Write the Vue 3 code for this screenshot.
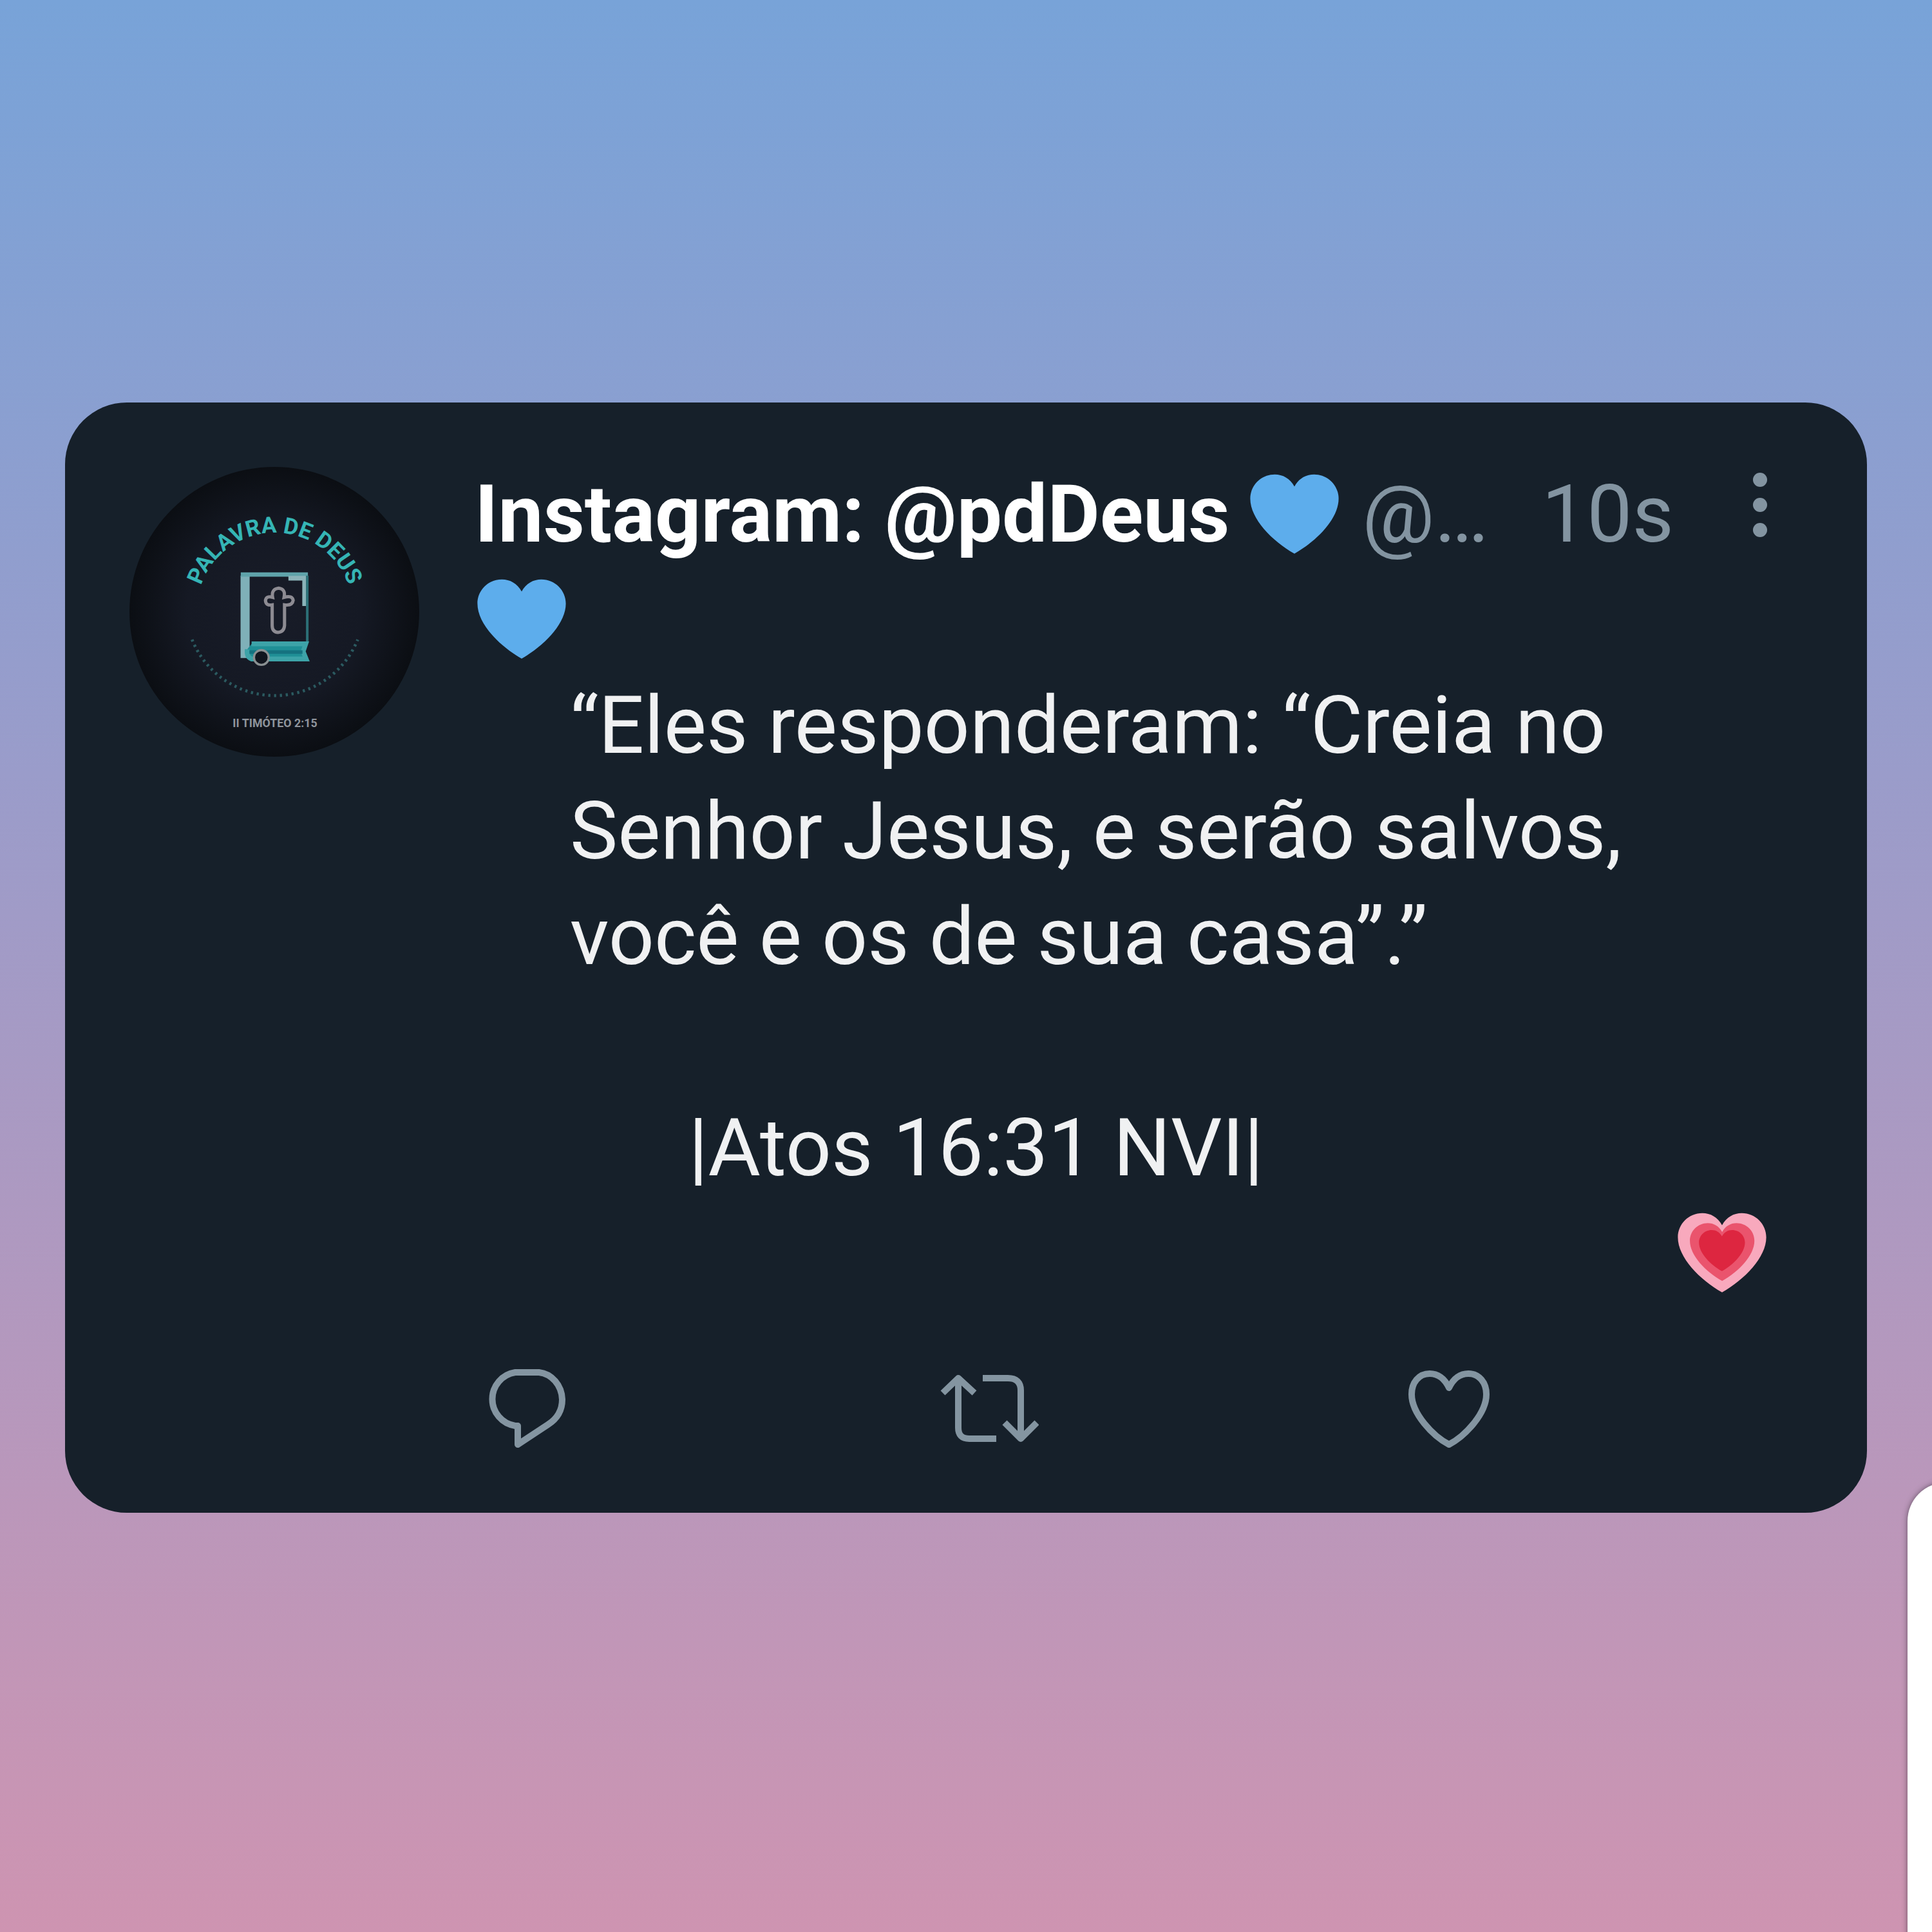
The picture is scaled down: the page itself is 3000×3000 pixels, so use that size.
<template>
  <div class="page">
    <article class="tweet">
      <!-- avatar -->
      <a class="avatar" href="#" aria-label="Palavra de Deus">
        <svg viewBox="36 48 1338 1338">
          <defs>
            <radialGradient id="avatar-bg">
              <stop offset="0" stop-color="#181c28" />
              <stop offset="0.6" stop-color="#151924" />
              <stop offset="1" stop-color="#0b0e13" />
            </radialGradient>
            <path id="avatar-arc" d="M347 712A360 360 0 0 1 1067 712" />
          </defs>
          <circle cx="705" cy="717" r="669" fill="url(#avatar-bg)" />
          <text class="arc-text" fill="#35b5b5">
            <textPath href="#avatar-arc" startOffset="50%" text-anchor="middle">PALAVRA DE DEUS</textPath>
          </text>
          <g fill="none">
            <path d="M325 845A412 412 0 0 0 1090 845" stroke="#2b5a60" stroke-width="14" stroke-dasharray="10 17" />
            <path d="M570 930V550" stroke="#7fb0b8" stroke-width="42" />
            <path d="M550 545H860" stroke="#5fa3aa" stroke-width="20" />
            <path d="M770 562H845V690" stroke="#8bb3b9" stroke-width="22" />
            <path d="M857 550V860" stroke="#2c6f76" stroke-width="12" />
            <path d="M600 865H850L838 900L852 935H600Q575 925 580 890" fill="#1f8f96" stroke="#3da3a8" stroke-width="22" />
            <path d="M590 903H835" stroke="#157280" stroke-width="16" />
            <circle cx="645" cy="928" r="34" fill="#11151e" stroke="#8a9092" stroke-width="10" />
            <path
              d="M697 650Q690 612 725 608Q758 612 750 650Q788 640 792 664Q788 690 752 685V780Q750 810 722 812Q695 810 695 780V685Q665 690 664 664Q668 642 697 650Z"
              stroke="#8d8b92"
              stroke-width="15"
            />
          </g>
          <text class="verse-text" x="708" y="1248" text-anchor="middle" fill="#8f949c">II TIMÓTEO 2:15</text>
        </svg>
      </a>

      <div class="content">
        <header class="tweet-header">
          <a class="name" href="#">Instagram: @pdDeus</a>
          <svg class="emoji" viewBox="0 0 36 36"><path fill="#5dadec" :d="heart" /></svg>
          <span class="handle">@…</span>
          <time class="time">10s</time>
          <button class="more" type="button" aria-label="Mais">
            <svg viewBox="0 0 24 102">
              <circle cx="12" cy="12" r="11" />
              <circle cx="12" cy="51" r="11" />
              <circle cx="12" cy="90" r="11" />
            </svg>
          </button>
        </header>

        <div class="tweet-body">
          <div class="row">
            <svg class="emoji" viewBox="0 0 36 36"><path fill="#5dadec" :d="heart" /></svg>
          </div>
          <p class="quote">
            <template v-for="line in lines" :key="line">{{ line }}<br /></template>
          </p>
          <p class="source">|Atos 16:31 NVI|</p>
          <div class="row end">
            <svg class="emoji" viewBox="0 0 36 36">
              <path fill="#f8a9bd" :d="heart" />
              <path fill="#ea546d" :d="heart" transform="translate(4.9 4.6) scale(0.73)" />
              <path fill="#dd2640" :d="heart" transform="translate(8.6 7.8) scale(0.52)" />
            </svg>
          </div>
        </div>

        <!-- actions -->
        <footer class="actions">
          <button v-for="action in actions" :key="action.label" class="action" type="button" :aria-label="action.label">
            <svg viewBox="0 0 160 160"><path :d="action.path" /></svg>
          </button>
        </footer>
      </div>
    </article>

    <div class="side-panel"></div>
  </div>
</template>

<script setup>
const heart =
  'M35.9 11.8C35.9 6.4 31.5 2 26 2C22.7 2 19.8 3.6 18 6.9C16.2 3.6 13.3 2 10 2C4.5 2 .1 6.4 .1 11.8C.1 20 9 29 18 34.1C27 29 35.9 20 35.9 11.8Z'

const lines = [
  '“Eles responderam: “Creia no',
  'Senhor Jesus, e serão salvos,',
  'você e os de sua casa”.”'
]

const actions = [
  {
    label: 'Responder',
    path: 'M63 26H100A40 44 0 0 1 136 68Q136 93 114 107L67 138V109H63A42 42 0 0 1 63 26Z'
  },
  {
    label: 'Retweetar',
    path: 'M11 58L35 35L60 58M35 37V112Q35 129 52 129H94M73 35H112Q132 35 132 54V126M107 104L132 129L157 104'
  },
  {
    label: 'Curtir',
    path: 'M81 50C74 35 63 28 51 28C34 28 23 42 23 60C23 90 56 125 81 138C106 125 139 90 139 60C139 42 128 28 111 28C99 28 88 35 81 50Z'
  }
]
</script>

<style>
body {
  margin: 0;
}
</style>

<style scoped>
.page {
  position: relative;
  box-sizing: border-box;
  min-height: 100vh;
  padding: 625px 101px;
  overflow: hidden;
  background: linear-gradient(#78a3d8, #9a9cca 40%, #ce94b1);
  font-family: Roboto, "Liberation Sans", sans-serif;
  font-size: 125px;
  line-height: 164px;
}

.tweet {
  display: flex;
  align-items: flex-start;
  gap: 86px;
  padding: 92px 152px 84px 100px;
  border-radius: 96px;
  background-color: #16202a;
  color: #f0f1f2;
}

.avatar {
  flex: none;
  width: 450px;
  height: 450px;
  margin-top: 8px;
}

.avatar svg,
.action svg,
.more svg {
  display: block;
  width: 100%;
  height: 100%;
}

.arc-text {
  font-family: Roboto, "Liberation Sans", sans-serif;
  font-size: 104px;
  font-weight: 700;
}

.verse-text {
  font-family: Roboto, "Liberation Sans", sans-serif;
  font-size: 53px;
  font-weight: 700;
}

.content {
  flex: 1;
  min-width: 0;
}

.tweet-header {
  display: flex;
  align-items: baseline;
  white-space: nowrap;
}

.name {
  color: #fff;
  font-weight: 700;
  text-decoration: none;
}

.emoji {
  flex: none;
  width: 138px;
  height: 138px;
  margin: 0 4px;
  vertical-align: -25px;
}

.tweet-header .emoji {
  align-self: flex-start;
  margin: 12px 36px 0 32px;
}

.handle,
.time {
  color: #8394a1;
}

.time {
  margin-left: auto;
}

.more {
  align-self: flex-start;
  width: 24px;
  height: 102px;
  margin: 16px 2px 0 122px;
  padding: 0;
  border: none;
  background: none;
  fill: #8394a1;
  cursor: pointer;
}

.quote,
.source {
  margin: 0;
}

.quote {
  padding-left: 148px;
}

.source {
  padding: 164px 0 0 332px;
}

.row {
  height: 164px;
}

.end {
  text-align: right;
}

.actions {
  display: flex;
  gap: 556px;
  margin-top: 76px;
}

.action {
  width: 160px;
  height: 160px;
  padding: 0;
  border: none;
  background: none;
  cursor: pointer;
}

.action path {
  fill: none;
  stroke: #8495a1;
  stroke-width: 10;
  stroke-linejoin: round;
}

/* panel sliding in from the right edge */
.side-panel {
  position: absolute;
  top: 2302px;
  right: -82px;
  bottom: -60px;
  width: 120px;
  border-radius: 60px;
  background-color: #fff;
  box-shadow: 0 0 8px rgba(60, 50, 60, 0.7);
}
</style>
